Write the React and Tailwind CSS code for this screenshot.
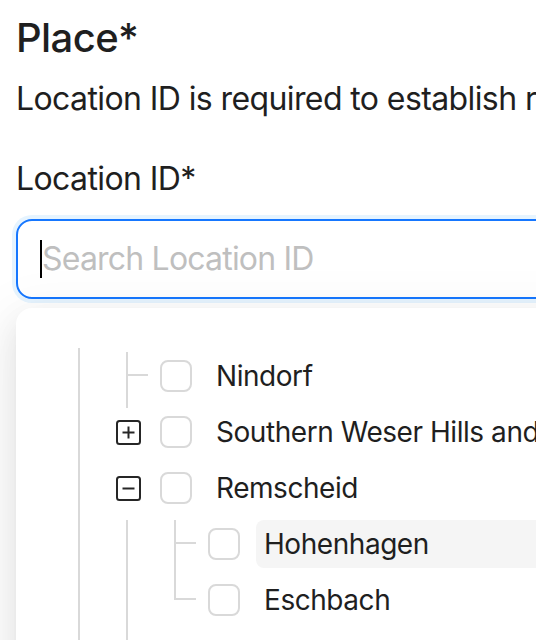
const rows = [
  { label: 'Nindorf', indents: 1, switcher: 'leaf' },
  { label: 'Southern Weser Hills and Valleys', indents: 1, switcher: 'plus' },
  { label: 'Remscheid', indents: 1, switcher: 'minus' },
  { label: 'Hohenhagen', indents: 2, switcher: 'leaf', active: true },
  { label: 'Eschbach', indents: 2, switcher: 'last' },
]

const IndentLine = () => (
  <div className="w-[48px] self-stretch shrink-0">
    <div className="ml-[22px] w-[2px] h-full bg-[#d9d9d9]" />
  </div>
)

const Toggle = ({ open }) => (
  <svg width="25" height="25" viewBox="0 0 25 25" fill="none">
    <rect x="1" y="1" width="23" height="23" rx="2.5" stroke="#262626" strokeWidth="2" />
    <line x1="6.5" y1="12.5" x2="18.5" y2="12.5" stroke="#262626" strokeWidth="2" />
    {!open && <line x1="12.5" y1="6.5" x2="12.5" y2="18.5" stroke="#262626" strokeWidth="2" />}
  </svg>
)

const Switcher = ({ type }) => {
  if (type === 'plus' || type === 'minus') {
    return (
      <div className="w-[48px] h-[48px] shrink-0 flex items-center justify-center">
        <Toggle open={type === 'minus'} />
      </div>
    )
  }
  return (
    <div className="w-[48px] self-stretch shrink-0 relative">
      <div
        className={
          type === 'last'
            ? 'absolute left-[22px] top-0 w-[2px] h-[24px] bg-[#d9d9d9]'
            : 'absolute left-[22px] top-0 w-[2px] h-full bg-[#d9d9d9]'
        }
      />
      <div className="absolute left-[22px] top-[22px] w-[22px] h-[2px] bg-[#d9d9d9]" />
    </div>
  )
}

const TreeRow = ({ row }) => (
  <div className="flex h-[56px]">
    {Array.from({ length: row.indents }).map((_, i) => (
      <IndentLine key={i} />
    ))}
    <Switcher type={row.switcher} />
    <div className="flex flex-1 h-[48px] items-center">
      <div className="ml-2 mr-4 w-8 h-8 shrink-0 rounded-lg border-2 border-[#d9d9d9] bg-white" />
      <div
        className={
          row.active
            ? 'flex-1 h-[48px] px-2 rounded-lg bg-[#f5f5f5] text-[28px] leading-[48px] tracking-[-0.45px] text-[#1f1f1f] whitespace-nowrap'
            : 'flex-1 h-[48px] px-2 rounded-lg text-[28px] leading-[48px] tracking-[-0.45px] text-[#1f1f1f] whitespace-nowrap'
        }
      >
        {row.label}
      </div>
    </div>
  </div>
)

export default function App() {
  return (
    <div className="w-[536px] h-[640px] overflow-hidden bg-white font-['Inter',sans-serif] text-[#1f1f1f]">
      <div className="px-4 w-[700px]">
        <h1 className="pt-[14px] text-[40px] leading-[48px] font-medium tracking-[-0.6px]">Place*</h1>
        <p className="mt-[17px] text-[32px] leading-[40px] tracking-[-0.6px] whitespace-nowrap">
          Location ID is required to establish relationships
        </p>
        <label className="block mt-[40px] text-[32px] leading-[40px] tracking-[-0.6px]">Location ID*</label>

        <div className="mt-[20px] h-[80px] w-[640px] rounded-2xl border-2 border-[#1677ff] bg-white shadow-[0_0_0_4px_rgba(5,145,255,0.1)] flex items-center pl-[22px]">
          <span className="w-[2px] h-[38px] bg-black shrink-0" />
          <span className="text-[32px] leading-[40px] tracking-[-0.8px] text-[#bfbfbf] whitespace-nowrap">
            Search Location ID
          </span>
        </div>

        <div className="mt-[9px] w-[640px] h-[400px] rounded-2xl bg-white pt-[40px] pl-[40px] pr-4 shadow-[0_12px_32px_0_rgba(0,0,0,0.08),0_6px_12px_-8px_rgba(0,0,0,0.12),0_18px_56px_16px_rgba(0,0,0,0.05)]">
          <div className="flex h-[4px]">
            <IndentLine />
          </div>
          {rows.map((row) => (
            <TreeRow key={row.label} row={row} />
          ))}
          <div className="flex h-[56px]">
            <IndentLine />
            <IndentLine />
          </div>
        </div>
      </div>
    </div>
  )
}
